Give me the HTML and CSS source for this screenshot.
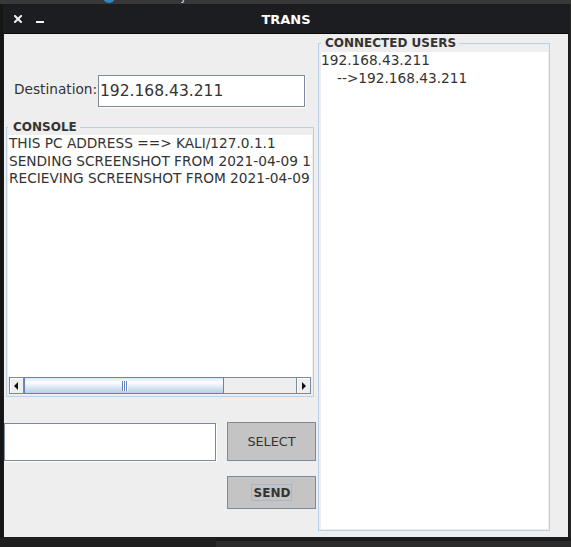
FILE: index.html
```html
<!DOCTYPE html>
<html>
<head>
<meta charset="utf-8">
<title>TRANS</title>
<link rel="stylesheet" href="styles.css">
</head>
<body>
<div class="top-strip">
  <span class="desk-label first">Document.txt</span>
  <span class="desk-icon"></span>
  <span class="desk-label">Window.java</span>
</div>
<div class="mid">
  <div class="left-strip"></div>
  <div class="window">
    <div class="titlebar">
      <div class="wm-buttons">
        <svg class="wm-icon" width="8" height="8" viewBox="0 0 8 8"><path d="M1 1L7 7M7 1L1 7" stroke="#f2f2f2" stroke-width="2" stroke-linecap="square"/></svg>
        <svg class="wm-icon" width="8" height="8" viewBox="0 0 8 8"><rect x="0" y="6" width="8" height="2" fill="#f2f2f2"/></svg>
      </div>
      <div class="wm-title">TRANS</div>
    </div>
    <div class="content">
      <div class="left-col">
        <div class="dest-row">
          <label class="dest-label">Destination:</label>
          <div class="field dest-field">192.168.43.211</div>
        </div>
        <fieldset class="group console">
          <legend class="group-title">CONSOLE</legend>
          <div class="console-text">
            <div class="line">THIS PC ADDRESS ==&gt; KALI/127.0.1.1</div>
            <div class="line">SENDING SCREENSHOT FROM 2021-04-09 12:41:07</div>
            <div class="line">RECIEVING SCREENSHOT FROM 2021-04-09 12:41:08</div>
          </div>
          <div class="hscroll">
            <div class="sb-btn"><span class="tri tri-left"></span></div>
            <div class="sb-thumb"><span class="grip"></span><span class="grip"></span><span class="grip"></span></div>
            <div class="sb-track"></div>
            <div class="sb-btn"><span class="tri tri-right"></span></div>
          </div>
        </fieldset>
        <div class="bottom-row">
          <div class="field file-field"></div>
          <div class="btn-col">
            <button class="btn select-btn">SELECT</button>
            <button class="btn send-btn"><span class="focus">SEND</span></button>
          </div>
        </div>
      </div>
      <fieldset class="group users">
        <legend class="group-title">CONNECTED USERS</legend>
        <div class="user-list">
          <div class="line">192.168.43.211</div>
          <div class="line sub">--&gt;192.168.43.211</div>
        </div>
      </fieldset>
    </div>
  </div>
  <div class="right-strip"></div>
</div>
<div class="bottom-strip">
  <div class="taskbar-left"></div>
  <div class="taskbar-right"></div>
</div>
</body>
</html>
```

FILE: styles.css
```css
html, body {
  margin: 0;
  padding: 0;
}

body {
  width: 571px;
  height: 547px;
  overflow: hidden;
  background: #1b1b1b;
  font-family: "DejaVu Sans", sans-serif;
}

/* desktop behind the window */
.top-strip {
  height: 4px;
  background: #383838;
  overflow: hidden;
  display: flex;
  align-items: flex-start;
}

.desk-label {
  font-size: 13px;
  line-height: 14px;
  margin-top: -11px;
  color: #cfcfcf;
  white-space: nowrap;
}

.desk-label.first {
  margin-left: -8px;
}

.desk-icon {
  width: 12px;
  height: 12px;
  margin: -9px 12px 0 22px;
  border-radius: 50%;
  background: #2f86c2;
}

.mid {
  display: flex;
  height: 534px;
}

.left-strip {
  width: 3px;
  background: #151515;
}

.right-strip {
  flex: 1;
  background: #2a2a2a;
}

.bottom-strip {
  display: flex;
  height: 9px;
}

.taskbar-left {
  width: 216px;
  background: #1f1f1f;
}

.taskbar-right {
  flex: 1;
  margin-top: 3px;
  background: #2b2b2b;
}

/* window frame */
.window {
  box-sizing: border-box;
  width: 567px;
  height: 534px;
  padding: 0 2px 1px 1px;
  background: #1c1d21;
  border-radius: 7px 7px 0 0;
}

.titlebar {
  height: 29px;
  border-bottom: 1px solid #08080a;
  display: grid;
  align-items: center;
}

.wm-buttons,
.wm-title {
  grid-area: 1 / 1;
}

.wm-buttons {
  justify-self: start;
  display: flex;
  gap: 14px;
  margin-left: 10px;
  padding-top: 1px;
}

.wm-icon {
  display: block;
}

.wm-title {
  justify-self: center;
  color: #ffffff;
  font-weight: bold;
  font-size: 13px;
  padding-top: 2px;
}

/* window content */
.content {
  width: 564px;
  height: 503px;
  background: #eeeeee;
  display: flex;
  align-items: flex-start;
  color: #333333;
}

.left-col {
  width: 314px;
  flex: none;
}

.dest-row {
  display: flex;
  align-items: center;
  margin-top: 41px;
  padding-left: 10px;
}

.dest-label {
  width: 84px;
  font-size: 13.7px;
  padding-bottom: 4px;
}

.field {
  box-sizing: border-box;
  background: #ffffff;
  border: 1px solid #7a8a99;
  box-shadow: 1px 1px 0 #ffffff;
}

.dest-field {
  width: 207px;
  height: 32px;
  padding: 0 0 0 1px;
  font-size: 15.5px;
  line-height: 30px;
  color: #333333;
}

/* titled groups */
.group {
  margin: 0;
  min-width: 0;
  border: 1px solid #b8cfe5;
}

.group-title {
  font-size: 12px;
  font-weight: bold;
  line-height: 12px;
  color: #333333;
}

.console {
  box-sizing: border-box;
  width: 308px;
  margin: 14px 0 0 2px;
  padding: 2px 1px 2px 1px;
}

.console .group-title {
  padding: 0 3px 0 5px;
}

.line {
  font-size: 13.7px;
  line-height: 17.6px;
  white-space: nowrap;
  overflow: hidden;
}

.console-text {
  height: 242px;
  background: #ffffff;
  padding-left: 1px;
  overflow: hidden;
}

/* horizontal scrollbar */
.hscroll {
  display: flex;
  height: 17px;
  margin: 0 1px;
}

.sb-btn {
  box-sizing: border-box;
  width: 15px;
  flex: none;
  background: #eeeeee;
  border: 1px solid #7a8a99;
  box-shadow: inset 1px 1px 0 #ffffff;
  display: flex;
  align-items: center;
  justify-content: center;
}

.tri {
  width: 0;
  height: 0;
  border-top: 4px solid transparent;
  border-bottom: 4px solid transparent;
}

.tri-left {
  border-right: 4px solid #111111;
  margin-left: -1px;
}

.tri-right {
  border-left: 4px solid #111111;
  margin-left: 1px;
}

.sb-thumb {
  box-sizing: border-box;
  width: 200px;
  flex: none;
  border: 1px solid #6382bf;
  background: linear-gradient(to bottom, #dde8f3 0%, #ffffff 30%, #dde8f3 60%, #b8cfe5 100%);
  display: flex;
  justify-content: center;
  align-items: center;
  gap: 1px;
}

.grip {
  width: 1px;
  height: 10px;
  background: #6382bf;
  box-shadow: 1px 0 0 #ffffff;
}

.sb-track {
  box-sizing: border-box;
  flex: 1;
  background: #eeeeee;
  border-top: 1px solid #7a8a99;
  border-bottom: 1px solid #7a8a99;
}

/* bottom controls */
.bottom-row {
  display: flex;
  align-items: flex-start;
  margin-top: 25px;
}

.file-field {
  width: 212px;
  height: 38px;
  margin-top: 1px;
  margin-right: 11px;
}

.btn-col {
  display: flex;
  flex-direction: column;
  gap: 15px;
}

.btn {
  box-sizing: border-box;
  width: 89px;
  margin: 0;
  padding: 0;
  background: #c4c4c4;
  border: 1px solid #7a8a99;
  color: #333333;
  font-family: "DejaVu Sans", sans-serif;
}

.select-btn {
  height: 39px;
  font-size: 12.8px;
}

.send-btn {
  height: 33px;
  font-size: 12px;
  font-weight: bold;
}

.focus {
  display: inline-block;
  padding: 1px 1px 0 2px;
  border: 1px solid #a3b8cc;
  line-height: 14px;
}

/* connected users */
.users {
  box-sizing: border-box;
  width: 232px;
  flex: none;
  margin-top: 3px;
  padding: 3px 1px 1px 2px;
}

.users .group-title {
  padding: 0 3px 0 4px;
}

.user-list {
  height: 477px;
  background: #ffffff;
}

.line.sub {
  padding-left: 16px;
}
```
